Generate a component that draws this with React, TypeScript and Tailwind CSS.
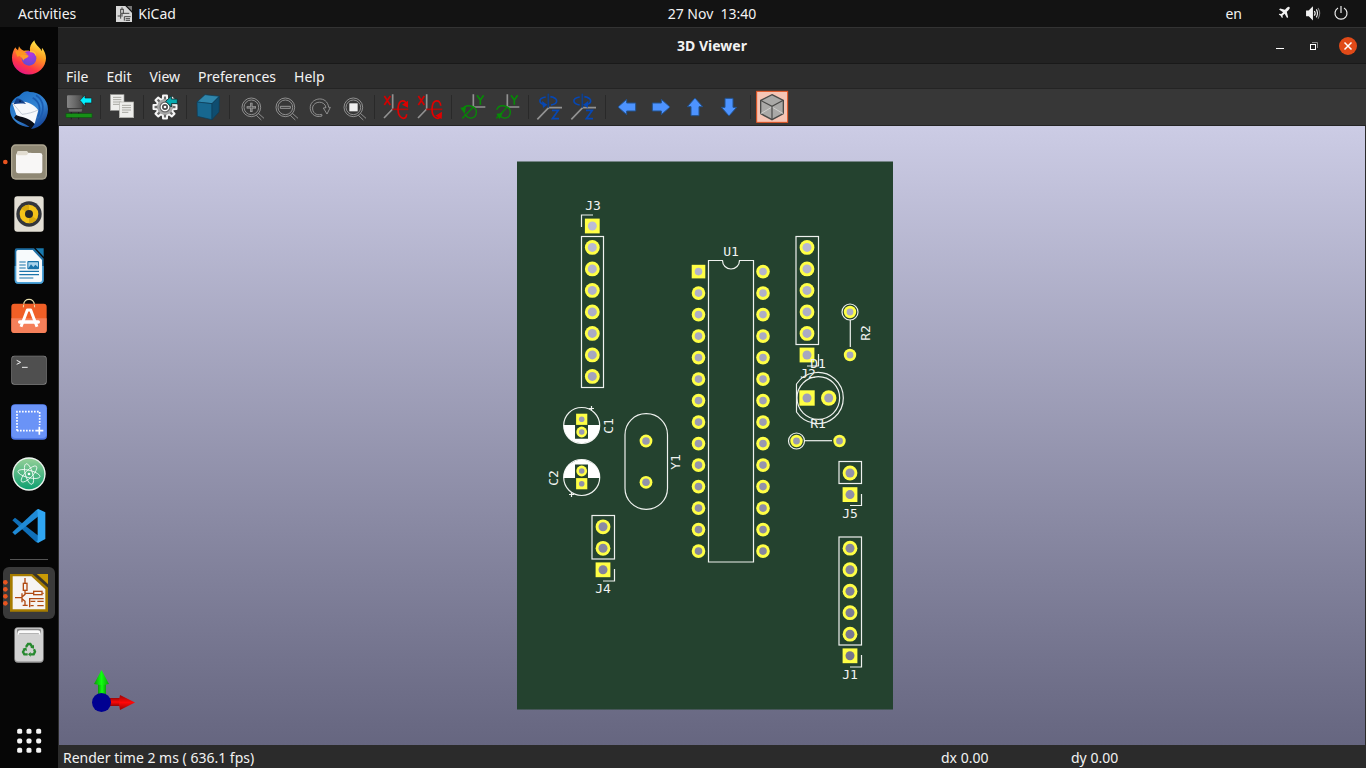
import type { ReactNode } from "react";

/* ---------- Dock icons: each is drawn on a 174 x 156 grid ---------- */

const dockApps: { name: string; running?: boolean; art: ReactNode }[] = [
  {
    name: "Firefox",
    art: (
      <g>
        <defs>
          <linearGradient id="fx" x1="0.8" y1="0" x2="0.3" y2="1">
            <stop offset="0" stopColor="#fff44f" />
            <stop offset="0.4" stopColor="#ff9a20" />
            <stop offset="0.75" stopColor="#ff3647" />
            <stop offset="1" stopColor="#e31587" />
          </linearGradient>
          <radialGradient id="fxg" cx="0.6" cy="0.2" r="0.9">
            <stop offset="0" stopColor="#b833e1" />
            <stop offset="1" stopColor="#5a4fd0" />
          </radialGradient>
        </defs>
        <path
          d="M46 52 C48 57 51 58 54 61 L57 49 C60 56 65 60 72 62 C78 62 84 61 90 63 C88 51 93 41 103 31 C105 43 116 49 122 58 L125 64 L126 53 C134 63 138 74 138 85 A51 49 0 0 1 36 84 C36 72 40 61 46 52 Z"
          fill="url(#fx)"
        />
        <circle cx="87" cy="85" r="22" fill="url(#fxg)" />
        <path d="M53 76 C60 68 75 72 86 77 C84 86 73 82 70 92 C67 84 62 78 53 76 Z" fill="#ff9d25" />
        <path d="M46 64 C58 60 74 64 84 74 C74 72 62 76 52 80 Z" fill="#ff9421" />
        <path d="M90 63 C100 60 111 68 108 79 C103 68 97 66 90 67 Z" fill="#ffbd3e" />
      </g>
    ),
  },
  {
    name: "Thunderbird",
    art: (
      <g transform="translate(0 -156)">
        <defs>
          <linearGradient id="tb" x1="0.2" y1="0" x2="0.8" y2="1">
            <stop offset="0" stopColor="#1c6fc4" />
            <stop offset="0.55" stopColor="#3585d3" />
            <stop offset="1" stopColor="#123d91" />
          </linearGradient>
        </defs>
        <path
          d="M66 190 C72 184 84 182 89 186 C120 186 144 208 144 238 C144 270 121 295 94 297 L92 291 C60 292 29 270 30 236 C31 216 44 201 57 198 Z"
          fill="url(#tb)"
        />
        <path d="M37 220 L52 263 C66 266 88 271 104 281 L115 241 C98 216 62 208 37 220 Z" fill="#f6f8fb" />
        <path d="M40 222 C50 234 60 245 66 253 C84 251 100 247 114 240" fill="none" stroke="#a9b4c2" strokeWidth="2" />
        <path d="M48 255 C62 262 86 262 104 282 L94 296 C75 276 56 278 42 263 Z" fill="#0a0d16" />
        <path d="M50 205 C62 206 70 212 78 222 C66 220 54 220 40 223 Z" fill="#123f88" />
        <circle cx="60" cy="214" r="3" fill="#07204c" />
        <path d="M98 203 C118 214 124 236 114 260 M108 196 C134 212 134 244 117 270" fill="none" stroke="#1a5bb0" strokeWidth="5" />
      </g>
    ),
  },
  {
    name: "Files",
    running: true,
    art: (
      <g transform="translate(0 -312)">
        <rect x="33" y="343" width="108" height="106" rx="14" fill="#aca590" />
        <rect x="37" y="347" width="100" height="98" rx="11" fill="#8f8874" />
        <path d="M51 380 V368 Q51 363 56 363 H80 L84 368 H94 V380 Z" fill="#dcd7ca" />
        <rect x="48" y="369" width="79" height="61" rx="7" fill="#f8f7f6" />
        <path d="M51 376 V368 Q51 363 56 363 H79 Q83 363 85 369 Q82 376 78 376 Z" fill="#e2ddd1" />
      </g>
    ),
  },
  {
    name: "Rhythmbox",
    art: (
      <g transform="translate(0 -468)">
        <rect x="43" y="499" width="88" height="106" rx="9" fill="#e3dfd5" />
        <circle cx="87" cy="552" r="38" fill="#33363c" />
        <circle cx="87" cy="552" r="28" fill="#f3c319" />
        <path d="M87 552 L64 536 A28 28 0 0 1 87 524 Z M87 552 L110 568 A28 28 0 0 1 87 580 Z" fill="#d8a90e" />
        <circle cx="87" cy="552" r="12" fill="#25272b" />
      </g>
    ),
  },
  {
    name: "LibreOffice Writer",
    art: (
      <g transform="translate(0 -624)">
        <path d="M50 655 H102 L131 686 V750 Q131 761 120 761 H54 Q44 761 44 750 V662 Q44 655 50 655 Z" fill="#1e6ea3" />
        <path d="M44 708 H131 V750 Q131 761 120 761 H54 Q44 761 44 750 Z" fill="#4da3d9" />
        <path d="M107 655 H131 V680 Z" fill="#1879ae" />
        <path d="M54 660 H98 L126 690 V750 Q126 756 120 756 H54 Q49 756 49 750 V665 Q49 660 54 660 Z" fill="#f7fafc" />
        <path d="M58 696 H77 M58 705 H77 M58 714 H77 M58 724 H117 M58 734 H117 M58 744 H100" stroke="#1a74aa" strokeWidth="3.5" />
        <rect x="82" y="693" width="35" height="25" rx="3" fill="#1a74aa" />
        <path d="M85 715 V697 H114 V711 L106 704 L100 711 L93 703 Z" fill="#a9d3ec" />
      </g>
    ),
  },
  {
    name: "Ubuntu Software",
    art: (
      <g>
        <path d="M71 44 C72 23 102 23 103 44" fill="none" stroke="#e9dfae" strokeWidth="4" />
        <rect x="34" y="41" width="106" height="88" rx="9" fill="#f05f26" />
        <path d="M34 85 H140 V120 Q140 129 131 129 H43 Q34 129 34 120 Z" fill="#f5805a" />
        <path d="M63 110 L82 60 H92 L111 110" fill="none" stroke="#fff" strokeWidth="9" strokeLinejoin="round" />
        <rect x="54" y="91" width="66" height="10" rx="5" fill="#fff" />
        <path d="M71 44 L70 52 M103 44 L104 52" stroke="#e9dfae" strokeWidth="3" />
      </g>
    ),
  },
  {
    name: "Terminal",
    art: (
      <g transform="translate(0 -156)">
        <rect x="34" y="197" width="106" height="87" rx="9" fill="#8b8b8b" />
        <rect x="36" y="199" width="102" height="83" rx="8" fill="#4f4f4f" />
        <path d="M50 211 L62 217 L50 223" fill="none" stroke="#f2f2f2" strokeWidth="3" />
        <path d="M66 232 H83" stroke="#f2f2f2" strokeWidth="3" />
      </g>
    ),
  },
  {
    name: "Screenshot",
    art: (
      <g transform="translate(0 -312)">
        <rect x="33" y="343" width="108" height="106" rx="12" fill="#4f78e8" />
        <rect x="35" y="344" width="104" height="100" rx="11" fill="#6a93f7" />
        <path d="M51 422 V365 H119 V405 M51 422 H104" fill="none" stroke="#fff" strokeWidth="5" strokeDasharray="5 4" />
        <path d="M118 410 V434 M106 422 H130" stroke="#fff" strokeWidth="5" />
      </g>
    ),
  },
  {
    name: "Atom",
    art: (
      <g transform="translate(0 -468)">
        <defs>
          <linearGradient id="atom" x1="0" y1="0" x2="0" y2="1">
            <stop offset="0" stopColor="#93cf97" />
            <stop offset="1" stopColor="#0fa071" />
          </linearGradient>
        </defs>
        <circle cx="87" cy="552" r="50" fill="#eef5f0" />
        <circle cx="87" cy="552" r="46" fill="url(#atom)" />
        <g fill="none" stroke="#f3faf5" strokeWidth="2.5">
          <ellipse cx="87" cy="552" rx="34" ry="11" transform="rotate(14 87 552)" />
          <ellipse cx="87" cy="552" rx="32" ry="11" transform="rotate(74 87 552)" />
          <ellipse cx="87" cy="552" rx="32" ry="11" transform="rotate(134 87 552)" />
        </g>
        <circle cx="87" cy="552" r="4" fill="#fff" />
      </g>
    ),
  },
  {
    name: "Visual Studio Code",
    art: (
      <g transform="translate(0 -624)">
        <path d="M37 691 L45 683 L116 738 V758 L108 756 Z" fill="#0f6fb8" />
        <path d="M37 727 L45 735 L116 678 V658 L108 661 Z" fill="#1f8ad6" />
        <path d="M109 660 L115 657 L136 667 V747 L115 758 L109 756 Q113 755 113 750 V667 Q113 662 109 660 Z" fill="#2fa5f2" />
      </g>
    ),
  },
];

const kicadArt = (
  <g transform="translate(0 -78)">
    <path d="M30 102 H144 V215 H30 Z" fill="#a67c00" />
    <path d="M38 109 H94 L136 148 V208 H38 Z" fill="#f6f4f2" />
    <path d="M97 102 L144 143 V133 L110 102 Z" fill="#39352b" />
    <path d="M112 102 H144 V131 Z" fill="#c99a06" />
    <g fill="none" stroke="#b04a12" strokeWidth="4">
      <path d="M75 114 V130 M75 152 V163 L66 171 M75 160 H101 M127 160 H131 M45 173 H66 M66 160 V187 M66 176 L75 184 V194 M68 196 H83" />
      <rect x="70" y="130" width="11" height="21" />
      <rect x="101" y="154" width="25" height="10" />
      <path d="M89 202 V176 H131 M92 184 H106 M112 184 H131 M92 197 H101 M112 197 H131" />
    </g>
  </g>
);

const trashArt = (
  <g transform="translate(0 -234)">
    <rect x="43" y="262" width="88" height="106" rx="11" fill="#9d9d9d" />
    <rect x="45" y="264" width="84" height="100" rx="10" fill="#d2d2d2" />
    <path d="M51 269 Q52 266 57 266 H117 Q122 266 123 270 V278 Q122 282 117 281 H57 Q52 282 51 278 Z" fill="#8a8a8a" />
    <path d="M53 283 V276 Q55 271 60 271 H114 Q120 271 121 276 V283 Q118 286 116 280 H58 Q56 286 53 283 Z" fill="#fafafa" />
    <g fill="none" stroke="#27892f" strokeWidth="7">
      <path d="M78 321 L84 312 H91 L97 321" />
      <path d="M102 328 L105 335 L101 343 H91" />
      <path d="M83 343 H73 L69 336 L74 327" />
    </g>
    <path d="M102 314 V326 L91 323 Z M92 336 V350 L84 343 Z M67 327 L79 322 L81 333 Z" fill="#27892f" />
  </g>
);

function DockButton({ name, children, active }: { name: string; children: ReactNode; active?: boolean }) {
  return (
    <button
      type="button"
      aria-label={name}
      className={active ? "mx-[3px] block h-[52px] rounded-md bg-[#3a3a3a]" : "mx-[3px] block h-[52px]"}
    >
      <svg viewBox="9 3 156 156" className="block h-[52px] w-[52px] overflow-visible" aria-hidden="true">
        {children}
      </svg>
    </button>
  );
}

function Dock() {
  return (
    <nav aria-label="Dock" className="flex w-[58px] shrink-0 flex-col bg-[#060606] pt-1">
      {dockApps.map((app) => (
        <DockButton key={app.name} name={app.name}>
          {app.running && <circle cx="16" cy="84" r="7" fill="#e9541f" />}
          {app.art}
        </DockButton>
      ))}
      <div className="flex h-4 items-center px-2.5">
        <div className="h-px w-full bg-[#545454]" />
      </div>
      <DockButton name="KiCad" active>
        {[49, 70, 91, 112].map((y) => (
          <circle key={y} cx="16" cy={y} r="7" fill="#e9541f" />
        ))}
        {kicadArt}
      </DockButton>
      <DockButton name="Trash">{trashArt}</DockButton>
      <div className="mt-auto">
        <DockButton name="Show Applications">
          {[49, 78, 106].map((y) =>
            [59, 87, 116].map((x) => <rect key={`${x}-${y}`} x={x - 7.5} y={y - 7.5} width="15" height="15" rx="5" fill="#f5f5f5" />),
          )}
        </DockButton>
      </div>
    </nav>
  );
}

/* ---------- Toolbar icons: 102 x 108 grid with its middle at (51, 54) ---------- */

const magnifier = (
  <g fill="none" stroke="#a0a0a0" strokeWidth="2.5">
    <circle cx="52" cy="55" r="28" />
    <circle cx="52" cy="55" r="22" />
    <path d="M67 79 L82 93 M73 73 L90 88" />
  </g>
);

const axisX = (
  <g fill="none">
    <path d="M41 16 V60 L15 87" stroke="#929292" strokeWidth="5" />
    <path d="M16 21 L34 48 M34 21 L16 48" stroke="#d40000" strokeWidth="5" />
    <path d="M40 61 H88" stroke="#a80d0d" strokeWidth="5" />
    <path d="M83 50 C83 31 58 27 57 60 C57 91 82 96 83 76" stroke="#e00000" strokeWidth="5" />
  </g>
);

const axisY = (
  <g fill="none">
    <path d="M52 16 V54 H88" stroke="#929292" strokeWidth="5" />
    <path d="M63 19 L73 33 L83 19 M73 32 V47" stroke="#078a07" strokeWidth="5" />
    <path d="M52 54 L19 88" stroke="#0a7c0a" strokeWidth="5" />
    <path d="M20 62 C28 42 62 50 61 70 C60 90 40 93 26 76" stroke="#078a07" strokeWidth="4" />
  </g>
);

const axisZ = (
  <g fill="none">
    <path d="M47 56 H87 M47 56 L13 91" stroke="#929292" strokeWidth="5" />
    <path d="M46 14 V56" stroke="#0d3f8c" strokeWidth="5" />
    <path d="M38 24 C14 28 16 44 38 48 M54 48 C76 44 78 28 52 23" stroke="#0647b4" strokeWidth="5" />
    <path d="M57 64 H76 L58 89 H78" stroke="#0647b4" strokeWidth="5" />
  </g>
);

/* Eight-toothed cog outline around (cx, cy). */
function cogPath(cx: number, cy: number, outer: number, inner: number) {
  const points: string[] = [];
  for (let i = 0; i < 8; i++) {
    const mid = (i * Math.PI) / 4;
    for (const [offset, radius] of [
      [-0.26, inner],
      [-0.17, outer],
      [0.17, outer],
      [0.26, inner],
    ]) {
      points.push(`${(cx + radius * Math.cos(mid + offset)).toFixed(1)} ${(cy + radius * Math.sin(mid + offset)).toFixed(1)}`);
    }
  }
  return `M${points.join(" L")} Z`;
}

const cyanArrow = "M49 34 L66 18 V27 H84 V41 H66 V51 Z";
const blueArrow = "M24 54 L50 31 V42 H77 V66 H50 V77 Z";

const toolGroups: { label: string; art: ReactNode; pressed?: boolean }[][] = [
  [
    {
      label: "Reload board",
      art: (
        <g>
          <defs>
            <linearGradient id="chip" x1="0" y1="0" x2="1" y2="0">
              <stop offset="0" stopColor="#858585" />
              <stop offset="0.5" stopColor="#6a6a6a" />
              <stop offset="1" stopColor="#484848" />
            </linearGradient>
          </defs>
          <rect x="15" y="19" width="46" height="38" rx="3" fill="url(#chip)" />
          <path d="M18 59 H62 L60 69 H20 Z" fill="#6c6c6c" stroke="#303030" strokeWidth="2" />
          <rect x="12" y="74" width="78" height="11" fill="#178f17" stroke="#085f0d" strokeWidth="2" />
          <path d="M28 69 V93 M50 69 V93" stroke="#222" strokeWidth="3" strokeDasharray="5 12" />
          <path d="M54 34 L69 18 V27 H89 V42 H69 V52 Z" fill="#00f0ff" stroke="#222" strokeWidth="2" />
        </g>
      ),
    },
  ],
  [
    {
      label: "Copy image",
      art: (
        <g>
          <rect x="16" y="17" width="41" height="47" fill="#eeeeec" stroke="#a0a09c" strokeWidth="2" />
          <path d="M24 25 H49 M24 32 H49 M24 39 H49 M24 46 H49" stroke="#a6a6a0" strokeWidth="3" />
          <rect x="43" y="39" width="43" height="47" fill="#eeeeec" stroke="#b0b0aa" strokeWidth="2" />
          <path d="M51 49 H78 M51 56 H78 M51 63 H78 M51 70 H70" stroke="#a6a6a0" strokeWidth="3" />
        </g>
      ),
    },
  ],
  [
    {
      label: "Render options",
      art: (
        <g>
          <path d={cogPath(51, 54, 35, 25)} fill="#6b6b6b" stroke="#f6f6f6" strokeWidth="6" strokeLinejoin="round" />
          <circle cx="51" cy="54" r="20" fill="none" stroke="#a8a8a8" strokeWidth="7" />
          <circle cx="51" cy="54" r="11" fill="#4a4a4a" stroke="#fff" strokeWidth="4" />
          <circle cx="51" cy="54" r="4" fill="#fff" />
          <path d={cyanArrow} transform="translate(4 3)" fill="#06abb0" stroke="#16383a" strokeWidth="3" />
        </g>
      ),
    },
  ],
  [
    {
      label: "Raytracing",
      art: (
        <g stroke="#0c3c58" strokeWidth="2" strokeLinejoin="round">
          <path d="M18 39 L42 17 L85 22 L63 44 Z" fill="#2f86ac" />
          <path d="M18 39 L63 44 V92 L19 82 Z" fill="#17678f" />
          <path d="M63 44 L85 22 L84 69 L63 92 Z" fill="#0f4d70" />
        </g>
      ),
    },
  ],
  [
    {
      label: "Zoom in",
      art: (
        <g>
          {magnifier}
          <path d="M52 41 V69 M38 55 H66" stroke="#a8a8a8" strokeWidth="7" />
          <path d="M52 43 V67 M40 55 H64" stroke="#4a4a4a" strokeWidth="2" />
        </g>
      ),
    },
    { label: "Zoom out", art: <g>{magnifier}<path d="M37 52 H67 V58 H37 Z" fill="none" stroke="#a8a8a8" strokeWidth="2.5" /></g> },
    {
      label: "Redraw",
      art: (
        <g fill="none" stroke="#a0a0a0" strokeWidth="2.5">
          <path d="M60 81 C38 88 22 71 25 52 C29 26 75 18 80 55 H85 L75 75 L64 57 L72 56 C68 33 36 36 32 54 C30 71 42 81 59 76 Z" />
        </g>
      ),
    },
    { label: "Fit to page", art: <g>{magnifier}<rect x="40" y="43" width="25" height="24" fill="#eee" /></g> },
  ],
  [
    { label: "Rotate X clockwise", art: <g>{axisX}<path d="M69 47 L87 35 L87 56 Z" fill="#e00000" /></g> },
    { label: "Rotate X counterclockwise", art: <g>{axisX}<path d="M67 80 L87 68 L86 90 Z" fill="#e00000" /></g> },
  ],
  [
    { label: "Rotate Y clockwise", art: <g>{axisY}<path d="M13 56 L30 54 L26 75 Z" fill="#078a07" /></g> },
    { label: "Rotate Y counterclockwise", art: <g>{axisY}<path d="M19 74 L38 72 L29 91 Z" fill="#078a07" /></g> },
  ],
  [
    { label: "Rotate Z clockwise", art: <g>{axisZ}<path d="M27 36 L43 47 L30 57 Z" fill="#0647b4" /></g> },
    { label: "Rotate Z counterclockwise", art: <g>{axisZ}<path d="M64 36 L48 47 L62 57 Z" fill="#0647b4" /></g> },
  ],
  [
    { label: "Move left", art: <path d={blueArrow} fill="#4d93ff" stroke="#22528f" strokeWidth="3" /> },
    { label: "Move right", art: <path d={blueArrow} transform="rotate(180 51 54)" fill="#4d93ff" stroke="#22528f" strokeWidth="3" /> },
    { label: "Move up", art: <path d={blueArrow} transform="rotate(90 51 54)" fill="#4d93ff" stroke="#22528f" strokeWidth="3" /> },
    { label: "Move down", art: <path d={blueArrow} transform="rotate(-90 51 54)" fill="#4d93ff" stroke="#22528f" strokeWidth="3" /> },
  ],
  [
    {
      label: "Orthographic projection",
      pressed: true,
      art: (
        <g>
          <rect x="5" y="7" width="93" height="93" fill="#f6c5b5" stroke="#e95420" strokeWidth="3" />
          <path d="M51 17 L85 34 V74 L51 92 L17 74 V34 Z" fill="#aaa9a7" stroke="#4a4a48" strokeWidth="4" />
          <path d="M17 74 L51 54 L85 74" fill="none" stroke="#cfcfcd" strokeWidth="3" />
          <path d="M17 34 L51 52 L85 34 M51 52 V92" fill="none" stroke="#4a4a48" strokeWidth="3.5" />
        </g>
      ),
    },
  ],
];

function Toolbar() {
  return (
    <div role="toolbar" aria-label="View tools" className="flex h-[38px] shrink-0 border-y border-[#242424] bg-[#373737] pl-1">
      {toolGroups.map((group, i) => (
        <div key={group[0].label} className="flex items-center">
          {i > 0 && (
            <div className="flex w-[9px] justify-center">
              <div className="h-6 w-px bg-[#292929]" />
            </div>
          )}
          {group.map((tool) => (
            <button key={tool.label} type="button" aria-label={tool.label} aria-pressed={tool.pressed}>
              <svg viewBox="0 0 102 108" className="block h-9 w-[34px]" aria-hidden="true">
                {tool.art}
              </svg>
            </button>
          ))}
        </div>
      ))}
    </div>
  );
}

/* ---------- Circuit board ---------- */

const SILK = "#eef1ee";
const PAD = "#ffff45";
const PITCH = 21.5;

function Pad({ x, y, r = 7.4, hole = 4.5, square }: { x: number; y: number; r?: number; hole?: number; square?: boolean }) {
  return (
    <g>
      {square ? <rect x={x - r} y={y - r} width={r * 2} height={r * 2} fill={PAD} /> : <circle cx={x} cy={y} r={r} fill={PAD} />}
      <circle cx={x} cy={y} r={hole} fill="url(#backdrop)" />
    </g>
  );
}

function PadColumn({ x, y, count, r, hole }: { x: number; y: number; count: number; r?: number; hole?: number }) {
  return (
    <g>
      {Array.from({ length: count }, (_, i) => (
        <Pad key={i} x={x} y={y + i * PITCH} r={r} hole={hole} />
      ))}
    </g>
  );
}

function Label({ x, y, turned, children }: { x: number; y: number; turned?: boolean; children: string }) {
  return (
    <text
      x={x}
      y={y}
      textAnchor="middle"
      dominantBaseline="central"
      transform={turned ? `rotate(-90 ${x} ${y})` : undefined}
      className="fill-[#f1f3f1] font-['DejaVu_Sans_Mono',monospace] text-[13px]"
    >
      {children}
    </text>
  );
}

function Board() {
  return (
    <svg viewBox="59 126 1306 619" className="block h-full w-full" role="img" aria-label="Circuit board seen from above">
      <defs>
        <linearGradient id="backdrop" gradientUnits="userSpaceOnUse" x1="0" y1="126" x2="0" y2="745">
          <stop offset="0" stopColor="#cccce5" />
          <stop offset="1" stopColor="#666680" />
        </linearGradient>
      </defs>
      <rect x="517" y="161.5" width="376" height="548" fill="#24422f" />

      <g fill="none" stroke={SILK} strokeWidth="1.2">
        <path d="M581.5 227 V215 H593" />
        <rect x="581.5" y="236.5" width="22" height="151" />
        <path d="M708.5 260.5 H722.5 A8.3 8.3 0 0 0 739.5 260.5 H753.5 V562 H708.5 Z" />
        <rect x="796" y="236.5" width="22.5" height="108" />
        <path d="M807 366 H818.5 V354" />
        <circle cx="818.3" cy="398" r="21.3" />
        <path d="M796.5 384 V412 A25.5 25.5 0 1 0 796.5 384" />
        <circle cx="850" cy="312" r="8" />
        <path d="M850.3 320 V347" />
        <circle cx="796.5" cy="441" r="8" />
        <path d="M805 440.7 H832" />
        <rect x="839" y="461.5" width="22.5" height="22" />
        <path d="M850 505.5 H861.5 V494" />
        <rect x="839" y="537" width="22.5" height="108" />
        <path d="M850 667 H861.5 V655" />
        <rect x="592" y="515.5" width="22.5" height="43.5" />
        <path d="M603 581 H614.5 V569" />
        <rect x="625" y="413.7" width="42.5" height="95.6" rx="21" />
        <circle cx="581.7" cy="425.5" r="18" />
        <circle cx="581.7" cy="477.5" r="18" />
        <path d="M591.5 406 V411 M589 408.5 H594 M571.5 492 V497 M569 494.5 H574" />
      </g>

      <path d="M563.5 425 H600 A18.2 18.2 0 0 1 563.5 425 Z M563.5 478 H600 A18.2 18.2 0 0 0 563.5 478 Z" fill="#fff" />
      <path d="M575 424 H588 V438.7 H575 Z M575 464.5 H588 V479 H575 Z" fill="#24422f" />

      <Pad x={592.3} y={226} square />
      <PadColumn x={592.3} y={247.4} count={7} />
      <Pad x={698.5} y={271.6} r={6.8} hole={3.8} square />
      <PadColumn x={698.5} y={293.1} count={13} r={6.8} hole={3.8} />
      <PadColumn x={763} y={271.6} count={14} r={6.8} hole={3.8} />
      <PadColumn x={807} y={247.4} count={5} />
      <Pad x={807} y={355} square />
      <Pad x={807} y={398} r={7.7} square />
      <Pad x={828.7} y={398} r={7.7} />
      <Pad x={850} y={312} r={6.2} hole={3.4} />
      <Pad x={850} y={355} r={6.2} hole={3.4} />
      <Pad x={796.5} y={441} r={6.2} hole={3.4} />
      <Pad x={839.5} y={441} r={6.2} hole={3.4} />
      <Pad x={850} y={473} />
      <Pad x={850} y={494.6} square />
      <PadColumn x={850} y={548.2} count={5} />
      <Pad x={850} y={655.8} square />
      <PadColumn x={603} y={526.8} count={2} />
      <Pad x={603} y={569.8} square />
      <Pad x={646} y={441} r={6.4} hole={3.8} />
      <Pad x={646} y={482.3} r={6.4} hole={3.8} />
      <Pad x={581.7} y={419.3} r={5.6} hole={2.8} square />
      <Pad x={581.7} y={432} r={5.4} hole={2.8} />
      <Pad x={581.7} y={471} r={5.4} hole={2.8} />
      <Pad x={581.7} y={483.7} r={5.6} hole={2.8} square />

      <Label x={593} y={205}>J3</Label>
      <Label x={731} y={251}>U1</Label>
      <Label x={818} y={363}>D1</Label>
      <Label x={808} y={373}>J2</Label>
      <Label x={818} y={423}>R1</Label>
      <Label x={865} y={333} turned>R2</Label>
      <Label x={850} y={513}>J5</Label>
      <Label x={850} y={674}>J1</Label>
      <Label x={603} y={588}>J4</Label>
      <Label x={608} y={426} turned>C1</Label>
      <Label x={553} y={478} turned>C2</Label>
      <Label x={675} y={462} turned>Y1</Label>
    </svg>
  );
}

function AxisGizmo() {
  return (
    <svg viewBox="0 0 44 48" className="absolute bottom-[29px] left-8 h-12 w-11" aria-hidden="true">
      <defs>
        <linearGradient id="green-cone" x1="0" y1="0" x2="1" y2="0">
          <stop offset="0" stopColor="#0a9a0a" />
          <stop offset="0.5" stopColor="#10ff10" />
          <stop offset="1" stopColor="#0b9f0b" />
        </linearGradient>
        <linearGradient id="red-cone" x1="0" y1="0" x2="0" y2="1">
          <stop offset="0" stopColor="#9a0505" />
          <stop offset="0.5" stopColor="#ff0808" />
          <stop offset="1" stopColor="#960505" />
        </linearGradient>
      </defs>
      <rect x="7" y="14" width="8" height="18" fill="url(#green-cone)" />
      <path d="M10.5 2 L18 16 Q10.5 18 3 16 Z" fill="url(#green-cone)" />
      <rect x="16" y="30" width="14" height="8" fill="url(#red-cone)" />
      <path d="M44 34.5 L29 42 Q27 34 29 27 Z" fill="url(#red-cone)" />
      <circle cx="10.5" cy="34.5" r="9.5" fill="#000091" />
    </svg>
  );
}

/* ---------- Page ---------- */

function TopBar() {
  return (
    <header className="grid h-[27px] shrink-0 grid-cols-[58px_1fr_auto_1fr] items-center bg-[#131313]">
      <div className="col-span-2 flex items-center gap-10 pl-[18px]">
        <button type="button">Activities</button>
        <button type="button" className="flex items-center gap-1.5">
          <svg viewBox="0 0 48 48" className="h-4 w-4" aria-hidden="true">
            <path d="M0 0 H28 L48 20 V48 H0 Z" fill="#d8d8d8" />
            <path d="M33 0 H48 V15 Z" fill="#777" />
            <path d="M18 4 V10 M18 24 V32 M5 30 H14 M14 24 V38 M20 22 H40 M25 44 V32 H44 M29 38 H42 M29 43 H42" stroke="#444" strokeWidth="3" fill="none" />
            <rect x="14" y="10" width="8" height="12" fill="none" stroke="#444" strokeWidth="3" />
          </svg>
          KiCad
        </button>
      </div>
      <button type="button" className="whitespace-pre">27 Nov  13:40</button>
      <div className="flex items-center justify-end pr-[17px]">
        <button type="button" className="mr-[35px]">en</button>
        <button type="button" aria-label="System menu" className="flex items-center gap-3 text-[#f2f2f2]">
          <svg viewBox="0 0 48 48" className="h-4 w-4" aria-hidden="true" fill="currentColor">
            <path
              transform="translate(3 0) scale(0.8)"
              d="M43 4 Q47 8 40 15 L33 22 L38 42 L34 45 L25 29 L17 36 L18 43 L15 45 L10 37 L3 32 L5 29 L12 30 L19 23 L4 13 L8 9 L26 14 L33 7 Q40 1 43 4 Z"
            />
          </svg>
          <svg viewBox="0 0 48 48" className="h-4 w-4" aria-hidden="true" fill="none" stroke="currentColor" strokeWidth="3.5">
            <path d="M5 15 H12 L22 5 V39 L12 29 H5 Z" fill="currentColor" />
            <path d="M28 15 Q33 22 28 29 M34 10 Q41 22 34 34" />
            <path d="M39 6 Q49 22 39 38" strokeOpacity="0.5" />
          </svg>
          <svg viewBox="0 0 48 48" className="h-4 w-4" aria-hidden="true" fill="none" stroke="currentColor" strokeWidth="3.5">
            <path d="M15 6 A18 18 0 1 0 33 6 M24 0 V21" />
          </svg>
        </button>
      </div>
    </header>
  );
}

function TitleBar() {
  return (
    <div className="grid h-9 shrink-0 grid-cols-[1fr_auto_1fr] items-center border-t border-[#333333] bg-[#222222]">
      <span />
      <h1 className="font-bold">3D Viewer</h1>
      <div className="flex items-center justify-end gap-4 pr-[9px]">
        <button type="button" aria-label="Minimize">
          <svg viewBox="0 0 18 18" className="h-[18px] w-[18px]" aria-hidden="true">
            <path d="M5 11.5 H13" stroke="#fff" />
          </svg>
        </button>
        <button type="button" aria-label="Restore">
          <svg viewBox="0 0 18 18" className="h-[18px] w-[18px]" aria-hidden="true" fill="none">
            <path d="M7 5.5 H12.5 V11" stroke="#8a8a8a" />
            <rect x="5.5" y="7.5" width="5" height="5" stroke="#fff" />
          </svg>
        </button>
        <button type="button" aria-label="Close" className="h-[18px] w-[18px] rounded-full bg-[#e04a18]">
          <svg viewBox="0 0 18 18" className="block h-[18px] w-[18px]" aria-hidden="true">
            <path d="M5.5 5.5 L12.5 12.5 M12.5 5.5 L5.5 12.5" stroke="#fff" strokeWidth="1.5" />
          </svg>
        </button>
      </div>
    </div>
  );
}

export default function App() {
  return (
    <div className="flex h-screen flex-col bg-[#060606] font-['Noto_Sans','Open_Sans',sans-serif] text-sm leading-5 text-[#f2f2f2]">
      <TopBar />
      <div className="flex min-h-0 flex-1">
        <Dock />
        <main className="flex min-w-0 flex-1 flex-col">
          <TitleBar />
          <nav aria-label="Menu" className="flex h-[25px] shrink-0 items-center gap-0.5 border-t border-[#191919] bg-[#2d2d2d] pt-0.5">
            {["File", "Edit", "View", "Preferences", "Help"].map((item) => (
              <button key={item} type="button" className="px-2">
                {item}
              </button>
            ))}
          </nav>
          <Toolbar />
          <section aria-label="3D view" className="relative min-h-0 flex-1 border-x border-[#2b2b2b] bg-linear-to-b from-[#cccce5] to-[#666680]">
            <Board />
            <AxisGizmo />
          </section>
          <footer className="flex h-[23px] shrink-0 items-center bg-[#2b2b2b] pt-0.5 pr-[35px] pl-[5px]">
            <span className="flex-1">Render time 2 ms ( 636.1 fps)</span>
            <span className="w-[130px]">dx 0.00</span>
            <span className="w-[130px]">dy 0.00</span>
            <span className="w-[130px]" />
          </footer>
        </main>
      </div>
    </div>
  );
}
